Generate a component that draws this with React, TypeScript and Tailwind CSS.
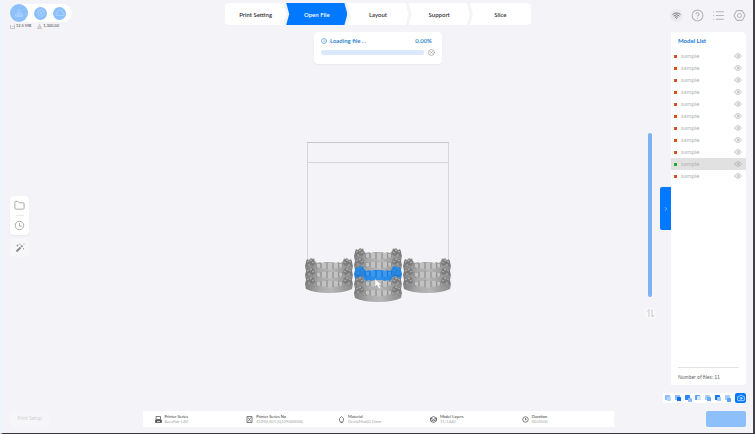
import React, { useState } from 'react';
import {
    Camera,
    ChevronRight,
    CircleHelp,
    CircleX,
    Eye,
    Folder,
    Hexagon,
    Info,
    List,
    Wifi,
} from 'lucide-react';

// ─── Data ──────────────────────────────────────────────────

const STEPS = ['Print Setting', 'Open File', 'Layout', 'Support', 'Slice'];

const MODELS = Array.from({ length: 11 }, (_, i) => ({ id: i, name: 'sample' }));

const JOB_INFO = [
    { icon: 'printer', label: 'Printer Series', value: 'AccuFab-L4D' },
    { icon: 'serial', label: 'Printer Series No', value: 'COM4:S01 (Q129040006)' },
    { icon: 'drop', label: 'Material', value: 'DentaMod(0.1)mm' },
    { icon: 'layers', label: 'Model Layers', value: '11/1440' },
    { icon: 'clock', label: 'Duration', value: '00:00:00' },
];

// back square / front square colours for each camera preset
const VIEWS = [
    { name: 'Perspective', back: '#8fbffa', front: '#b5d5fc', x: 2, y: 2 },
    { name: 'Front', back: '#8fbffa', front: '#0f6fe8', x: 2, y: 2 },
    { name: 'Back', back: '#2f86f2', front: '#8fbffa', x: 3, y: 3 },
    { name: 'Left', back: '#5ea3f6', front: '#d3e6fd', x: 2, y: 1 },
    { name: 'Right', back: '#a5ccfb', front: '#6dabf5', x: 2, y: 2 },
    { name: 'Top', back: '#1677e8', front: '#a5ccfb', x: 2, y: 2 },
    { name: 'Bottom', back: '#a5ccfb', front: '#5ea3f6', x: 2, y: 3 },
];

// ─── Icons ─────────────────────────────────────────────────

const JobIcon: React.FC<{ icon: string }> = ({ icon }) => (
    <svg className="h-[7px] w-[7px] shrink-0" viewBox="0 0 14 14" fill="none" stroke="#555" strokeWidth="1.5">
        {icon === 'printer' && (
            <>
                <path d="M2 1h9v6H2z" />
                <path d="M1 8h12v5H1z" fill="#555" />
                <path d="M4 11h6" stroke="#fff" />
            </>
        )}
        {icon === 'serial' && (
            <>
                <path d="M2 1h10v12H2z" />
                <path d="M4 3l6 8M10 3l-3 4M4 11l2-3" />
            </>
        )}
        {icon === 'drop' && <path d="M7 1l4 4v4l-2 3H5L3 9V5zM5 13h4" />}
        {icon === 'layers' && <path d="M7 1l6 3-6 3-6-3zM1 7l6 3 6-3M1 10l6 3 6-3M1 4v6M13 4v6" />}
        {icon === 'clock' && (
            <>
                <circle cx="7" cy="7" r="5.5" />
                <path d="M7 4v4l2-1" />
            </>
        )}
    </svg>
);

const BadgeIcon: React.FC<{ kind: 'user' | 'shield' | 'cloud' }> = ({ kind }) => (
    <svg className="h-[10px] w-[10px]" viewBox="0 0 20 20" fill="none" stroke="#b4d8ff" strokeWidth="1.5">
        {kind === 'user' && <path d="M10 3a3 3 0 0 1 2 5l-1 3h-2l-1-3a3 3 0 0 1 2-5zM3 12h14v5H3zM5 15h10" />}
        {kind === 'shield' && <path d="M4 5q6-4 12 0v5q0 5-6 7-6-2-6-7zM10 8v6M7 8h6" />}
        {kind === 'cloud' && <path d="M5 15a3 3 0 0 1 0-6 5 5 0 0 1 10 0 3 3 0 0 1 0 6z" />}
    </svg>
);

const HistoryIcon: React.FC = () => (
    <svg className="h-[11px] w-[11px]" viewBox="0 0 22 22" fill="none" stroke="currentColor" strokeWidth="1.8">
        <circle cx="11" cy="11" r="8.5" />
        <path d="M11 6v6h5" />
    </svg>
);

const WandIcon: React.FC = () => (
    <svg className="h-[10px] w-[10px]" viewBox="0 0 20 20" fill="none" stroke="currentColor">
        <path d="M3 17L11 9" strokeWidth="4" />
        <path d="M12 8l3-3" strokeWidth="3.500" />
        <path d="M5 3v4M3 5h4M10 1v3M17 10v3M18 1v2" strokeWidth="1.5" />
    </svg>
);

// ─── 3D scene ──────────────────────────────────────────────

interface ArchProps {
    x: number;
    y: number;
    selected?: boolean;
}

const Arch: React.FC<ArchProps> = ({ x, y, selected }) => {
    const line = selected ? '#1a6fc2' : '#8b8b8b';
    const crown = selected ? '#3b99f0' : '#c2c2c2';
    const molar = selected ? '#2484dc' : '#7c7c7c';
    return (
        <g transform={`translate(${x} ${y})`}>
            <path
                d="M1 4L2 1 4 2 6 0 8 1 9 0 10 3 12 5 15 4 17 5 20 4 24 4 28 4 31 5 33 4 36 5 38 3 39 0 40 1 42 0 44 2 46 1 47 4 48 8 47 13Q39 17 24 17 9 17 1 13L0 8Z"
                fill={selected ? 'url(#archBlue)' : 'url(#archGray)'}
            />
            <path d="M1 3l2-1 2 1 2-2 2 1 1 4-2 2-3-1-4 2zM47 3l-2-1-2 1-2-2-2 1-1 4 2 2 3-1 4 2z" fill={molar} />
            <path
                d="M2 4l2-1M5 3l2-1M3 7l2 0M7 5l2-1M46 4l-2-1M43 3l-2-1M45 7l-2 0M41 5l-2-1"
                stroke={crown}
                strokeWidth=".8"
            />
            <path
                d="M12 6h3v3l-1 1-2-1zM17 5h4v5l-2 1-2-1zM23 5h4v6l-2 1-2-1zM29 5h4v5l-2 1-2-1zM34 6h3v3l-2 1z"
                fill={crown}
            />
            <path
                d="M11 5v4l2 2M16 5v5M22 4v7M28 5v6M33.500 5v5M37.500 5v4M1 9l3 1 3-1 3 2M47 9l-3 1-3-1-3 2"
                stroke={line}
                strokeWidth=".8"
                fill="none"
            />
        </g>
    );
};

const Scene: React.FC = () => (
    <svg className="h-[161px] w-[148px]" viewBox="0 0 148 161" fill="none" role="img" aria-label="Build plate">
        <defs>
            <linearGradient id="archGray">
                <stop offset="0" stopColor="#7e7e7e" />
                <stop offset=".3" stopColor="#a9a9a9" />
                <stop offset=".55" stopColor="#b6b6b6" />
                <stop offset="1" stopColor="#8a8a8a" />
            </linearGradient>
            <linearGradient id="archBlue">
                <stop offset="0" stopColor="#2382dc" />
                <stop offset=".5" stopColor="#2b90ee" />
                <stop offset="1" stopColor="#2382dc" />
            </linearGradient>
        </defs>
        <path d="M3.500 0v118M144.500 0v118" stroke="#d6d6dc" />
        <path d="M3 20.500h142" stroke="#d6d6dc" />
        <path d="M3 .5h142" stroke="#c6c6cc" />
        {[116, 125, 134].map(y => <Arch key={y} x={1} y={y} />)}
        {[116, 125, 134].map(y => <Arch key={y} x={99} y={y} />)}
        <Arch x={50} y={106} />
        <Arch x={50} y={115} />
        <Arch x={50} y={124} selected />
        <Arch x={50} y={134} />
        <Arch x={50} y={143} />
        <path d="M71 137v8l2-2 2 4 2-1-2-3h3z" fill="#fff" stroke="#999" strokeWidth=".4" />
    </svg>
);

// ─── Model list ────────────────────────────────────────────

interface ModelListProps {
    selected: number;
    onSelect: (id: number) => void;
}

const ModelList: React.FC<ModelListProps> = ({ selected, onSelect }) => (
    <section className="flex h-[353px] w-[75px] flex-col rounded-r-sm bg-white">
        <h2 className="px-[7px] pt-1 pb-1 text-[6px] leading-[10px] font-bold text-[#1478d4]">Model List</h2>
        <ul>
            {MODELS.map(m => (
                <li
                    key={m.id}
                    className={`flex h-3 items-center pr-1 pl-[3px] ${m.id === selected ? 'bg-[#e1e1e1]' : ''}`}
                >
                    <button
                        type="button"
                        onClick={() => onSelect(m.id)}
                        className="flex flex-1 items-center gap-1 text-[6px] leading-[8px] text-[#b3b3b3]"
                    >
                        <span className={`h-[3px] w-[3px] ${m.id === selected ? 'bg-[#1fae2c]' : 'bg-[#d4521f]'}`} />
                        {m.name}
                    </button>
                    <button type="button" aria-label="Toggle visibility" className="text-[#a9a9a9]">
                        <Eye size={8} />
                    </button>
                </li>
            ))}
        </ul>
        <div className="mx-[7px] mt-auto border-t border-[#e2e2e2] pt-[5px] pb-1 text-[5px] leading-[8px] text-[#666]">
            Number of files: 11
        </div>
    </section>
);

// ─── App ───────────────────────────────────────────────────

const App: React.FC = () => {
    const [step, setStep] = useState(1);
    const [selected, setSelected] = useState(9);

    return (
        <div className="flex min-h-screen justify-between border-r-2 border-b border-l-[3px] border-r-[#404247] border-b-[#39373b] border-l-[#edf5ff] bg-[#f3f3f8] font-[Lato,sans-serif]">
            {/* left column */}
            <aside className="flex flex-1 flex-col items-start pt-1 pb-[6px] pl-[7px]">
                <div className="flex items-center gap-[6px] rounded-full bg-white pr-[6px]">
                    <button type="button" aria-label="Account" className="flex h-[18px] w-[18px] items-center justify-center rounded-full bg-[#8cc0fa]">
                        <BadgeIcon kind="user" />
                    </button>
                    <button type="button" aria-label="Security" className="flex h-[13px] w-[13px] items-center justify-center rounded-full bg-[#8cc0fa]">
                        <BadgeIcon kind="shield" />
                    </button>
                    <button type="button" aria-label="Cloud" className="flex h-[13px] w-[13px] items-center justify-center rounded-full bg-[#8cc0fa]">
                        <BadgeIcon kind="cloud" />
                    </button>
                </div>
                <div className="mt-px flex gap-[6px] text-[4px] leading-[6px] text-[#444]">
                    <span className="flex items-center gap-px">
                        <svg className="h-[5px] w-[5px]" viewBox="0 0 10 10" fill="none" stroke="#999">
                            <path d="M1 2v7h8V1M4 5h3" />
                        </svg>
                        12.5 MB
                    </span>
                    <span className="flex items-center gap-px">
                        <svg className="h-[5px] w-[5px]" viewBox="0 0 10 10" fill="none" stroke="#999">
                            <path d="M5 1l4 8H1zM3 6h4" />
                        </svg>
                        1,300.00
                    </span>
                </div>

                <div className="mt-[167px] flex w-[19px] flex-col items-center rounded-sm bg-white text-[#a3a3a3] shadow-xs">
                    <button type="button" aria-label="Open folder" className="flex h-[19px] items-center">
                        <Folder size={11} />
                    </button>
                    <span className="h-px w-2 bg-[#eaeaea]" />
                    <button type="button" aria-label="History" className="flex h-[19px] items-center">
                        <HistoryIcon />
                    </button>
                </div>
                <button
                    type="button"
                    aria-label="Auto arrange"
                    className="mt-[3px] flex h-[19px] w-[19px] items-center justify-center rounded-sm bg-[#f7f7fa] text-[#8a8a8a]"
                >
                    <WandIcon />
                </button>

                <button type="button" disabled className="mt-auto h-4 w-[39px] rounded-sm bg-[#f6f6f9] text-[5px] text-[#d2d2d6]">
                    Print Setup
                </button>
            </aside>

            {/* centre column */}
            <main className="flex w-[471px] shrink-0 flex-col items-center pt-[3px] pb-[6px]">
                <nav className="flex w-[306px]">
                    {STEPS.map((name, i) => (
                        <button
                            key={name}
                            type="button"
                            onClick={() => setStep(i)}
                            className={`h-[22px] flex-1 text-[6px] font-semibold ${
                                i === 0
                                    ? 'rounded-l-sm [clip-path:polygon(0_0,calc(100%_-_3px)_0,100%_50%,calc(100%_-_3px)_100%,0_100%)]'
                                    : i === STEPS.length - 1
                                        ? 'rounded-r-sm [clip-path:polygon(0_0,100%_0,100%_100%,0_100%,3px_50%)]'
                                        : '[clip-path:polygon(0_0,calc(100%_-_3px)_0,100%_50%,calc(100%_-_3px)_100%,0_100%,3px_50%)]'
                            } ${i === step ? 'bg-[#0078ff] text-white' : 'bg-white text-[#333]'}`}
                        >
                            {name}
                        </button>
                    ))}
                </nav>

                {/* loading card */}
                <div className="mt-[7px] h-8 w-32 rounded-sm bg-white px-[7px] pt-[5px] shadow-xs">
                    <div className="flex items-center gap-[3px] text-[6px] leading-[8px] font-semibold text-[#1478c8]">
                        <Info size={6} />
                        <span className="flex-1">Loading file . .</span>
                        <span className="pr-[3px]">0.00%</span>
                    </div>
                    <div className="mt-1 flex items-center gap-1">
                        <div className="h-[5px] flex-1 rounded-xs bg-[#dce9fc]" role="progressbar" aria-valuenow={0} aria-label="Loading file" />
                        <button type="button" aria-label="Cancel" className="text-[#888]">
                            <CircleX size={7} />
                        </button>
                    </div>
                </div>

                <div className="mt-[78px]">
                    <Scene />
                </div>

                <footer className="mt-auto grid h-4 w-full grid-cols-5 items-center bg-white pl-3">
                    {JOB_INFO.map(item => (
                        <div key={item.label} className="flex items-center gap-[3px] text-[4px] leading-[5px] whitespace-nowrap">
                            <JobIcon icon={item.icon} />
                            <div>
                                <p className="text-[#333]">{item.label}</p>
                                <p className="text-[#a5a5a5]">{item.value}</p>
                            </div>
                        </div>
                    ))}
                </footer>
            </main>

            {/* right column */}
            <aside className="flex flex-1 flex-col items-end pt-[9px] pr-[7px] pb-[6px]">
                <div className="flex h-[13px] items-center gap-2 text-[#b4b4b9]">
                    <button type="button" aria-label="Network" className="flex h-[13px] w-[13px] items-center justify-center rounded-full bg-[#eaeaef] text-[#555]">
                        <Wifi size={9} />
                    </button>
                    <button type="button" aria-label="Help">
                        <CircleHelp size={13} />
                    </button>
                    <button type="button" aria-label="Menu">
                        <List size={13} />
                    </button>
                    <button type="button" aria-label="Settings" className="relative">
                        <Hexagon size={13} className="rotate-90" />
                        <span className="absolute inset-1 rounded-full border border-[#b4b4b9]" />
                    </button>
                </div>

                <div className="mt-[10px] flex">
                    <div className="mr-1 flex w-3 flex-col items-center gap-[10px] pt-[101px]">
                        <input
                            type="range"
                            aria-label="Layer"
                            defaultValue={100}
                            className="h-[164px] w-1 appearance-none rounded-full bg-[#7db3f4] [writing-mode:vertical-lr] [&::-webkit-slider-thumb]:appearance-none"
                        />
                        <button type="button" aria-label="Swap direction" className="flex h-3 w-3 items-center justify-center rounded-full bg-[#f8f8fa]">
                            <svg className="h-[9px] w-[9px]" viewBox="0 0 18 18" fill="none" stroke="#bdbdc2" strokeWidth="1.5">
                                <path d="M2 5l4-4v15M16 12l-4 4V1" />
                            </svg>
                        </button>
                    </div>
                    <button
                        type="button"
                        aria-label="Collapse list"
                        className="flex h-[43px] w-[11px] items-center justify-center self-center rounded-l-xs bg-[#0078ff] text-white"
                    >
                        <ChevronRight size={6} />
                    </button>
                    <ModelList selected={selected} onSelect={setSelected} />
                </div>

                {/* camera presets */}
                <div className="mt-2 flex h-[10px] items-center gap-[3px] bg-white pl-[2px]">
                    {VIEWS.map(v => (
                        <button key={v.name} type="button" aria-label={v.name}>
                            <svg className="block h-[7px] w-[7px]" viewBox="0 0 7 7">
                                <rect width="5" height="5" rx=".5" fill={v.back} />
                                <rect x={v.x} y={v.y} width="4" height="4" rx=".5" fill={v.front} />
                            </svg>
                        </button>
                    ))}
                    <button type="button" aria-label="Screenshot" className="flex h-[10px] w-[11px] items-center justify-center rounded-xs bg-[#0078ff] text-white">
                        <Camera size={8} />
                    </button>
                </div>

                <button type="button" disabled aria-label="Next" className="mt-auto h-4 w-10 rounded-xs bg-[#8dbffb]" />
            </aside>
        </div>
    );
};

export default App;
